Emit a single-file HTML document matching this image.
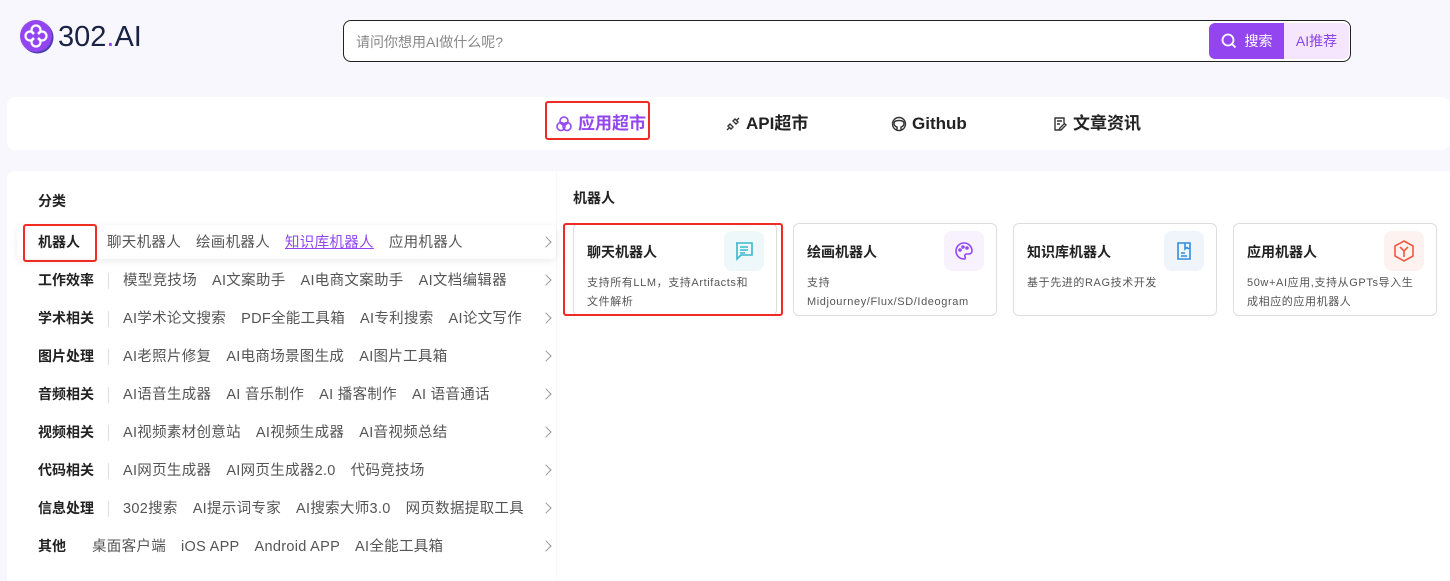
<!DOCTYPE html>
<html><head><meta charset="utf-8"><style>
*{margin:0;padding:0;box-sizing:border-box}
body{width:1450px;height:574px;overflow:hidden;background:#f8f7fd;font-family:"Liberation Sans","Noto Sans CJK SC",sans-serif;position:relative;color:#222}
.abs{position:absolute}
.logo{left:20px;top:20px;display:flex;align-items:center}
.logo span{font-size:29px;color:#1a2344;margin-left:4px}
.search{left:343px;top:20px;width:1008px;height:42px;border:1px solid #222;border-radius:8px;background:#fff}
.search .ph{position:absolute;left:12px;top:11px;font-size:14px;color:#888}
.sbtn{position:absolute;left:865px;top:2px;width:75px;height:36px;background:#9346f0;border-radius:6px 0 0 6px;color:#fff;font-size:14px;display:flex;align-items:center;justify-content:center;gap:8px}
.abtn{position:absolute;left:940px;top:2px;width:65px;height:36px;background:#f5e6fe;border-radius:0 6px 6px 0;color:#8b44e8;font-size:14px;display:flex;align-items:center;justify-content:center}
.nav{left:7px;top:97px;width:1443px;height:53px;background:#fff;border-radius:8px}
.ni{position:absolute;top:112px;height:24px;font-size:17px;font-weight:bold;display:flex;align-items:center;gap:5px;color:#222;line-height:24px}
.red{position:absolute;border:2px solid #ef2b24;border-radius:3px}
.left{left:7px;top:171px;width:549px;height:410px;background:#fff;border-radius:8px 0 0 0}
.right{left:557px;top:171px;width:893px;height:410px;background:#fff}
.row{position:absolute;left:17px;width:539px;height:34px;line-height:34px;font-size:14.5px;letter-spacing:0.3px;white-space:nowrap}
.row b{display:inline-block;padding-left:21px;color:#222;font-weight:bold;font-size:14px;letter-spacing:0}
.row .sep{display:inline-block;vertical-align:middle;width:1px;height:16px;background:#ddd;margin:0 14px 0 14px}
.row .it{color:#555;margin-right:15px}
.row .ch{position:absolute;right:6px;top:13px;width:8px;height:8px;border-top:1px solid #999;border-right:1px solid #999;transform:rotate(45deg)}
.card{position:absolute;top:223px;width:204px;height:93px;border:1px solid #ddd;border-radius:6px;background:#fff}
.card h4{position:absolute;left:13px;top:18px;font-size:14px;font-weight:bold;color:#222}
.card p{position:absolute;left:13px;top:50px;width:180px;font-size:11px;letter-spacing:0.6px;line-height:19px;color:#555}
.card .ic{position:absolute;left:150px;top:7px;width:40px;height:40px;border-radius:8px;display:flex;align-items:center;justify-content:center}
</style></head><body>
<div class="abs logo">
<svg width="34" height="34" viewBox="0 0 34 34"><circle cx="17.5" cy="17.5" r="16" fill="#4b3fb0"/><circle cx="16" cy="16" r="16" fill="#9346f0"/><g fill="none" stroke="#fff" stroke-width="2.2"><circle cx="16" cy="10" r="4.5"/><circle cx="16" cy="22" r="4.5"/><circle cx="10" cy="16" r="4.5"/><circle cx="22" cy="16" r="4.5"/></g><circle cx="16" cy="16" r="3" fill="#9346f0"/></svg>
<span>302<b style="color:#9346f0;font-weight:normal">.</b>AI</span></div>
<div class="abs search"><div class="ph">请问你想用AI做什么呢?</div>
<div class="sbtn"><svg width="16" height="16" viewBox="0 0 16 16" fill="none" stroke="#fff" stroke-width="1.8"><circle cx="7" cy="7" r="5.5"/><path d="M11 11l3.5 3.5"/></svg>搜索</div>
<div class="abtn">AI推荐</div></div>
<div class="abs nav"></div>
<div class="ni" style="left:555px;color:#9346f0"><svg width="18" height="18" viewBox="0 0 18 18" fill="none" stroke="#9346f0" stroke-width="1.6"><circle cx="9" cy="6" r="4"/><circle cx="6" cy="11.5" r="4"/><circle cx="12" cy="11.5" r="4"/></svg>应用超市</div>
<div class="red" style="left:545px;top:101px;width:105px;height:39px"></div>
<div class="ni" style="left:725px"><svg width="16" height="16" viewBox="0 0 16 16" fill="none" stroke="#333" stroke-width="1.4"><path d="M2 14l3-3M11 5l3-3M5 8l3 3-2 2-3-3zM8 5l3 3 2-2-3-3z"/></svg>API超市</div>
<div class="ni" style="left:891px"><svg width="16" height="16" viewBox="0 0 16 16" fill="none" stroke="#333" stroke-width="1.4"><circle cx="8" cy="8" r="6.5"/><path d="M6 14v-3c-2-.5-3-1.5-3-3.5 0-2 2-3 5-3s5 1 5 3c0 2-1 3-3 3.5v3"/></svg>Github</div>
<div class="ni" style="left:1052px"><svg width="16" height="16" viewBox="0 0 16 16" fill="none" stroke="#333" stroke-width="1.4"><path d="M12 7V2H3v12h4M5 5h5M5 8h3M9 14l5-5-1.5-1.5-5 5V14z"/></svg>文章资讯</div>
<div class="abs left"></div>
<div class="abs right"></div>
<div class="abs" style="left:38px;top:191px;font-size:14px;font-weight:bold">分类</div>
<div class="row" style="top:225px;box-shadow:0 2px 8px rgba(0,0,0,.08);border-radius:4px"><b style="margin-right:27px">机器人</b><span class="it">聊天机器人</span><span class="it">绘画机器人</span><span class="it" style="color:#9346f0;text-decoration:underline">知识库机器人</span><span class="it">应用机器人</span><i class="ch"></i></div>
<div class="red" style="left:23px;top:224px;width:74px;height:38px"></div>
<div class="row" style="top:263px"><b>工作效率</b><i class="sep"></i><span class="it">模型竞技场</span><span class="it">AI文案助手</span><span class="it">AI电商文案助手</span><span class="it">AI文档编辑器</span><i class="ch"></i></div>
<div class="row" style="top:301px"><b>学术相关</b><i class="sep"></i><span class="it">AI学术论文搜索</span><span class="it">PDF全能工具箱</span><span class="it">AI专利搜索</span><span class="it">AI论文写作</span><i class="ch"></i></div>
<div class="row" style="top:339px"><b>图片处理</b><i class="sep"></i><span class="it">AI老照片修复</span><span class="it">AI电商场景图生成</span><span class="it">AI图片工具箱</span><i class="ch"></i></div>
<div class="row" style="top:377px"><b>音频相关</b><i class="sep"></i><span class="it">AI语音生成器</span><span class="it">AI 音乐制作</span><span class="it">AI 播客制作</span><span class="it">AI 语音通话</span><i class="ch"></i></div>
<div class="row" style="top:415px"><b>视频相关</b><i class="sep"></i><span class="it">AI视频素材创意站</span><span class="it">AI视频生成器</span><span class="it">AI音视频总结</span><i class="ch"></i></div>
<div class="row" style="top:453px"><b>代码相关</b><i class="sep"></i><span class="it">AI网页生成器</span><span class="it">AI网页生成器2.0</span><span class="it">代码竞技场</span><i class="ch"></i></div>
<div class="row" style="top:491px"><b>信息处理</b><i class="sep"></i><span class="it">302搜索</span><span class="it">AI提示词专家</span><span class="it">AI搜索大师3.0</span><span class="it">网页数据提取工具</span><i class="ch"></i></div>
<div class="row" style="top:529px"><b style="margin-right:26px">其他</b><span class="it">桌面客户端</span><span class="it">iOS APP</span><span class="it">Android APP</span><span class="it">AI全能工具箱</span><i class="ch"></i></div>
<div class="abs" style="left:573px;top:188px;font-size:14px;font-weight:bold">机器人</div>
<div class="card" style="left:573px"><h4>聊天机器人</h4><div class="ic" style="background:#eef8fb"><svg width="22" height="22" viewBox="0 0 22 22" fill="none" stroke="#3bb8c9" stroke-width="1.6"><path d="M3 3h16v12H8l-4 4V3zM7 7h8M7 10h8M7 13h5"/></svg></div><p>支持所有LLM，支持Artifacts和<br>文件解析</p></div>
<div class="red" style="left:563px;top:223px;width:220px;height:93px"></div>
<div class="card" style="left:793px"><h4>绘画机器人</h4><div class="ic" style="background:#f7f2fd"><svg width="22" height="22" viewBox="0 0 22 22" fill="none" stroke="#9346f0" stroke-width="1.6"><path d="M11 3a8 8 0 1 0 0 16c1.5 0 1.5-1.5 1-2.5s0-2.5 1.5-2.5H16a3 3 0 0 0 3-3c0-4.5-3.5-8-8-8z"/><circle cx="7" cy="10" r="1"/><circle cx="10" cy="7" r="1"/><circle cx="14" cy="8" r="1"/></svg></div><p>支持<span style="display:block;white-space:nowrap;overflow:hidden;text-overflow:ellipsis">Midjourney/Flux/SD/Ideogram</span></p></div>
<div class="card" style="left:1013px"><h4>知识库机器人</h4><div class="ic" style="background:#eff5fb"><svg width="22" height="22" viewBox="0 0 22 22" fill="none" stroke="#2f8de0" stroke-width="1.6"><path d="M5 3h12v16H5zM12 3v6l2-1.5 2 1.5M8 13h4M8 16h6"/></svg></div><p>基于先进的RAG技术开发</p></div>
<div class="card" style="left:1233px"><h4>应用机器人</h4><div class="ic" style="background:#fef2f0"><svg width="24" height="24" viewBox="0 0 24 24" fill="none" stroke="#f0583f" stroke-width="1.6"><path d="M12 2l9 5v10l-9 5-9-5V7zM8 8l4 4 4-4M12 12v6"/></svg></div><p>50w+AI应用,支持从GPTs导入生<br>成相应的应用机器人</p></div>
</body></html>
